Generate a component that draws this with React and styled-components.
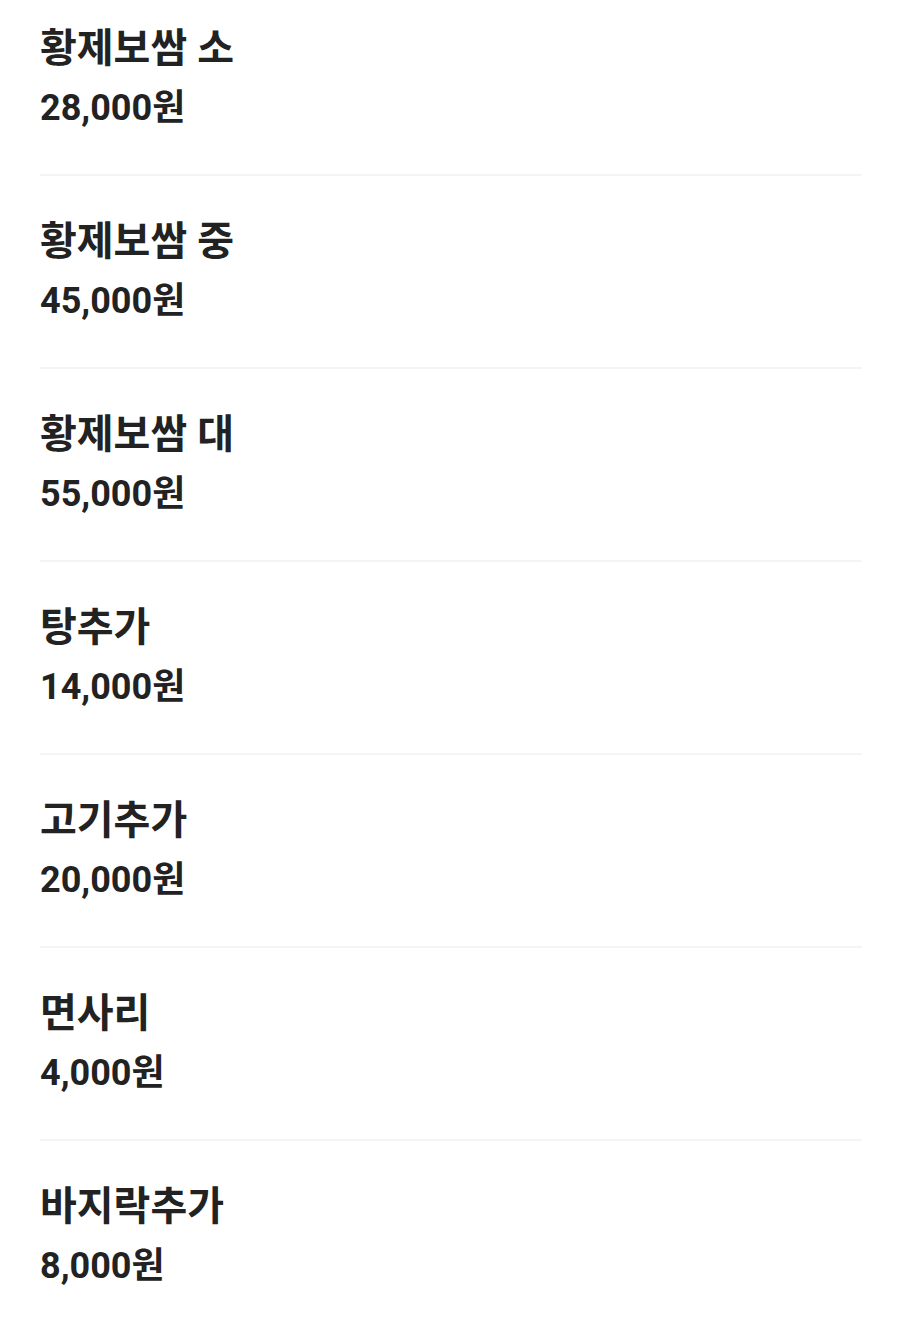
import React from "react";
import styled, { createGlobalStyle } from "styled-components";

const menu = [
  { name: "황제보쌈 소", price: 28000 },
  { name: "황제보쌈 중", price: 45000 },
  { name: "황제보쌈 대", price: 55000 },
  { name: "탕추가", price: 14000 },
  { name: "고기추가", price: 20000 },
  { name: "면사리", price: 4000 },
  { name: "바지락추가", price: 8000 }
];

const GlobalStyle = createGlobalStyle`
  body {
    margin: 0;
    background: #fff;
    font-family: Roboto, "Noto Sans CJK KR", sans-serif;
    color: #222;
  }
`;

const List = styled.ul`
  list-style: none;
  margin: 0;
  padding: 0 38px 0 40px;
`;

const Item = styled.li`
  display: flex;
  flex-direction: column;
  height: 193px;
  padding-top: 42px;
  box-sizing: border-box;
  border-bottom: 2px solid ${props => (props.last ? "transparent" : "#f4f4f4")};

  &:first-child {
    height: 176px;
    padding-top: 25px;
  }
`;

const Name = styled.div`
  font-size: 40px;
  font-weight: 700;
  line-height: 48px;
`;

const Price = styled.div`
  font-size: 36px;
  font-weight: 700;
  line-height: 42px;
  margin-top: 14px;
`;

const App = () => (
  <>
    <GlobalStyle />
    <List>
      {menu.map((item, i) => (
        <Item key={item.name} last={i === menu.length - 1}>
          <Name>{item.name}</Name>
          <Price>{item.price.toLocaleString("ko-KR")}원</Price>
        </Item>
      ))}
    </List>
  </>
);

export default App;
